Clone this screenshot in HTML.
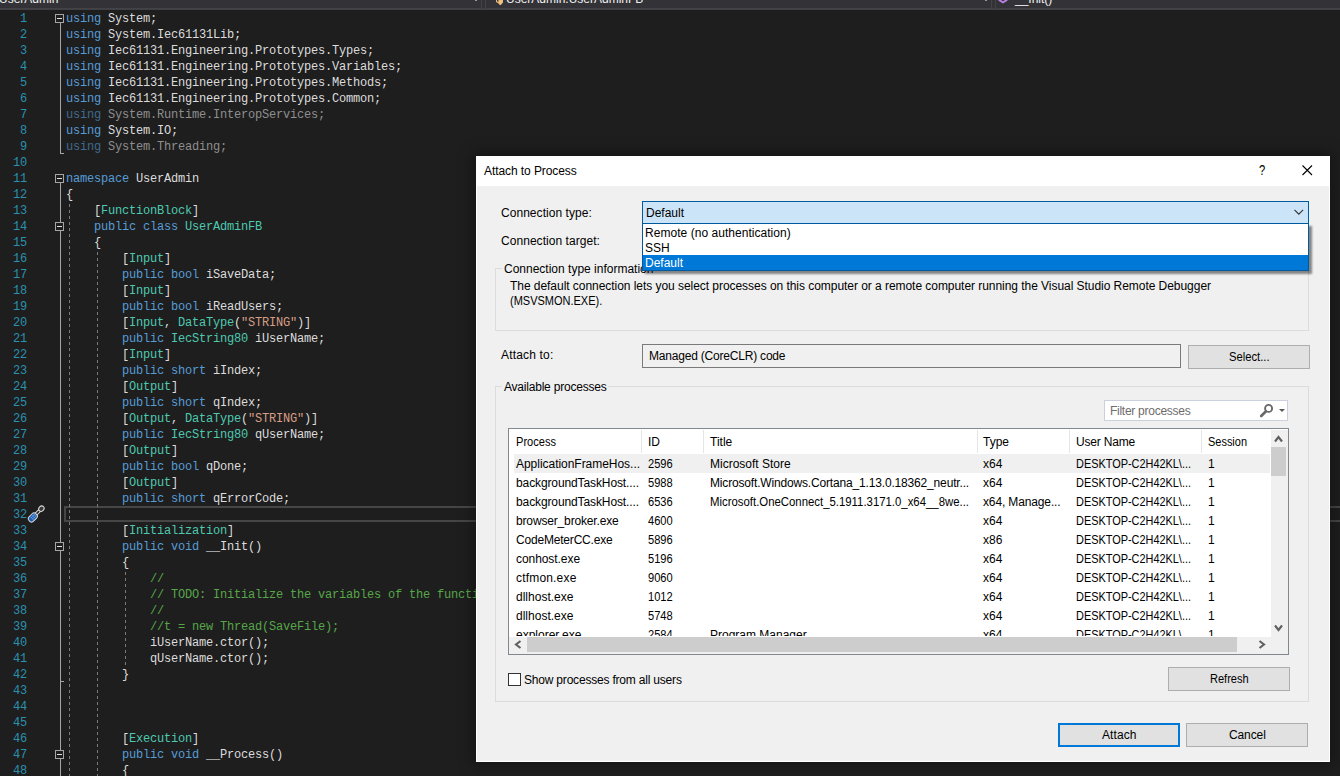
<!DOCTYPE html>
<html><head><meta charset="utf-8"><style>
html,body{margin:0;padding:0}
body{width:1340px;height:776px;overflow:hidden;background:#1e1e1e;position:relative;font-family:"Liberation Sans",sans-serif}
.a{position:absolute}
.ln{position:absolute;left:0;width:27px;text-align:right;color:#2b91af;font:12px "Liberation Mono",monospace;letter-spacing:-0.2px;line-height:16px;white-space:pre}
.cd{position:absolute;left:66px;font:12px "Liberation Mono",monospace;letter-spacing:-0.2px;line-height:16px;white-space:pre;color:#dcdcdc}
.fb{position:absolute;left:55px;width:7px;height:7px;border:1px solid #a5a5a5;background:#1e1e1e}
.fb:after{content:"";position:absolute;left:1px;top:3px;width:5px;height:1px;background:#e0e0e0}
.g{position:absolute;width:1px;background:repeating-linear-gradient(to bottom,#7a7a7a 0,#7a7a7a 3px,transparent 3px,transparent 6px)}
.t{position:absolute;font-size:12px;line-height:15px;white-space:pre;color:#000}
.btn{position:absolute;box-sizing:border-box;background:#e1e1e1;border:1px solid #adadad;font-size:12px;line-height:22px;text-align:center;color:#000}
</style></head><body>
<div class="a" style="left:0;top:0;width:1340px;height:8px;background:#333337"></div><div class="a" style="left:0;top:8px;width:1340px;height:2px;background:#3f3f46"></div><div class="a" style="left:-2px;top:-12px;width:482px;height:19px;border:1px solid #434346;background:#333337"></div><div class="a" style="left:485px;top:-12px;width:505px;height:19px;border:1px solid #434346;background:#333337"></div><div class="a" style="left:995px;top:-12px;width:348px;height:19px;border:1px solid #434346;background:#333337"></div><div class="t" style="left:-1px;top:-8px;color:#f1f1f1">UserAdmin</div><div class="a" style="left:475px;top:0;width:2px;height:1px;background:#999"></div><div class="a" style="left:985px;top:0;width:2px;height:1px;background:#999"></div><svg class="a" style="left:495px;top:0" width="10" height="6"><path d="M1 0 L2 0 L2 1.5 L3.5 1.5 L3.5 0 L8 0 L8 2.5 L6 4.8 L5 5.2 L3 3 L1 2 Z" fill="#eebf7f"/></svg><div class="t" style="left:506px;top:-8px;color:#f1f1f1">UserAdmin.UserAdminFB</div><svg class="a" style="left:998px;top:0" width="11" height="5"><path d="M0.5 0 L9.5 0 L9.5 0.8 L5 3.4 L0.5 0.8 Z" fill="#b77fe0"/><path d="M3.2 0 L5 1.2 L6.8 0 Z" fill="#2d2d30"/></svg><div class="t" style="left:1015px;top:-8px;color:#f1f1f1">__Init()</div><div class="a" style="left:64px;top:506px;width:1300px;height:12px;border:2px solid #464646"></div><div class="g" style="left:69px;top:204px;height:572px"></div><div class="g" style="left:97px;top:252px;height:524px"></div><div class="g" style="left:125px;top:572px;height:94px"></div><div class="a" style="left:60px;top:23px;width:1px;height:131px;background:#a5a5a5"></div><div class="a" style="left:60px;top:153px;width:4px;height:1px;background:#a5a5a5"></div><div class="a" style="left:60px;top:183px;width:1px;height:593px;background:#a5a5a5"></div><div class="a" style="left:60px;top:681px;width:4px;height:1px;background:#a5a5a5"></div><div class="fb" style="top:14px"></div><div class="fb" style="top:174px"></div><div class="fb" style="top:222px"></div><div class="fb" style="top:542px"></div><div class="fb" style="top:750px"></div><div class="ln" style="top:11px">1</div><div class="cd" style="top:11px"><span style="color:#569cd6">using</span><span style="color:#dcdcdc"> System;</span></div><div class="ln" style="top:27px">2</div><div class="cd" style="top:27px"><span style="color:#569cd6">using</span><span style="color:#dcdcdc"> System.Iec61131Lib;</span></div><div class="ln" style="top:43px">3</div><div class="cd" style="top:43px"><span style="color:#569cd6">using</span><span style="color:#dcdcdc"> Iec61131.Engineering.Prototypes.Types;</span></div><div class="ln" style="top:59px">4</div><div class="cd" style="top:59px"><span style="color:#569cd6">using</span><span style="color:#dcdcdc"> Iec61131.Engineering.Prototypes.Variables;</span></div><div class="ln" style="top:75px">5</div><div class="cd" style="top:75px"><span style="color:#569cd6">using</span><span style="color:#dcdcdc"> Iec61131.Engineering.Prototypes.Methods;</span></div><div class="ln" style="top:91px">6</div><div class="cd" style="top:91px"><span style="color:#569cd6">using</span><span style="color:#dcdcdc"> Iec61131.Engineering.Prototypes.Common;</span></div><div class="ln" style="top:107px">7</div><div class="cd" style="top:107px"><span style="color:#406a8c">using</span><span style="color:#8e8e8e"> System.Runtime.InteropServices;</span></div><div class="ln" style="top:123px">8</div><div class="cd" style="top:123px"><span style="color:#569cd6">using</span><span style="color:#dcdcdc"> System.IO;</span></div><div class="ln" style="top:139px">9</div><div class="cd" style="top:139px"><span style="color:#406a8c">using</span><span style="color:#8e8e8e"> System.Threading;</span></div><div class="ln" style="top:155px">10</div><div class="ln" style="top:171px">11</div><div class="cd" style="top:171px"><span style="color:#569cd6">namespace</span><span style="color:#dcdcdc"> UserAdmin</span></div><div class="ln" style="top:187px">12</div><div class="cd" style="top:187px"><span style="color:#dcdcdc">{</span></div><div class="ln" style="top:203px">13</div><div class="cd" style="top:203px"><span style="color:#dcdcdc">    [</span><span style="color:#4ec9b0">FunctionBlock</span><span style="color:#dcdcdc">]</span></div><div class="ln" style="top:219px">14</div><div class="cd" style="top:219px"><span style="color:#dcdcdc">    </span><span style="color:#569cd6">public</span><span style="color:#dcdcdc"> </span><span style="color:#569cd6">class</span><span style="color:#dcdcdc"> </span><span style="color:#4ec9b0">UserAdminFB</span></div><div class="ln" style="top:235px">15</div><div class="cd" style="top:235px"><span style="color:#dcdcdc">    {</span></div><div class="ln" style="top:251px">16</div><div class="cd" style="top:251px"><span style="color:#dcdcdc">        [</span><span style="color:#4ec9b0">Input</span><span style="color:#dcdcdc">]</span></div><div class="ln" style="top:267px">17</div><div class="cd" style="top:267px"><span style="color:#dcdcdc">        </span><span style="color:#569cd6">public</span><span style="color:#dcdcdc"> </span><span style="color:#569cd6">bool</span><span style="color:#dcdcdc"> iSaveData;</span></div><div class="ln" style="top:283px">18</div><div class="cd" style="top:283px"><span style="color:#dcdcdc">        [</span><span style="color:#4ec9b0">Input</span><span style="color:#dcdcdc">]</span></div><div class="ln" style="top:299px">19</div><div class="cd" style="top:299px"><span style="color:#dcdcdc">        </span><span style="color:#569cd6">public</span><span style="color:#dcdcdc"> </span><span style="color:#569cd6">bool</span><span style="color:#dcdcdc"> iReadUsers;</span></div><div class="ln" style="top:315px">20</div><div class="cd" style="top:315px"><span style="color:#dcdcdc">        [</span><span style="color:#4ec9b0">Input</span><span style="color:#dcdcdc">, </span><span style="color:#4ec9b0">DataType</span><span style="color:#dcdcdc">(</span><span style="color:#d69d85">&quot;STRING&quot;</span><span style="color:#dcdcdc">)]</span></div><div class="ln" style="top:331px">21</div><div class="cd" style="top:331px"><span style="color:#dcdcdc">        </span><span style="color:#569cd6">public</span><span style="color:#dcdcdc"> </span><span style="color:#4ec9b0">IecString80</span><span style="color:#dcdcdc"> iUserName;</span></div><div class="ln" style="top:347px">22</div><div class="cd" style="top:347px"><span style="color:#dcdcdc">        [</span><span style="color:#4ec9b0">Input</span><span style="color:#dcdcdc">]</span></div><div class="ln" style="top:363px">23</div><div class="cd" style="top:363px"><span style="color:#dcdcdc">        </span><span style="color:#569cd6">public</span><span style="color:#dcdcdc"> </span><span style="color:#569cd6">short</span><span style="color:#dcdcdc"> iIndex;</span></div><div class="ln" style="top:379px">24</div><div class="cd" style="top:379px"><span style="color:#dcdcdc">        [</span><span style="color:#4ec9b0">Output</span><span style="color:#dcdcdc">]</span></div><div class="ln" style="top:395px">25</div><div class="cd" style="top:395px"><span style="color:#dcdcdc">        </span><span style="color:#569cd6">public</span><span style="color:#dcdcdc"> </span><span style="color:#569cd6">short</span><span style="color:#dcdcdc"> qIndex;</span></div><div class="ln" style="top:411px">26</div><div class="cd" style="top:411px"><span style="color:#dcdcdc">        [</span><span style="color:#4ec9b0">Output</span><span style="color:#dcdcdc">, </span><span style="color:#4ec9b0">DataType</span><span style="color:#dcdcdc">(</span><span style="color:#d69d85">&quot;STRING&quot;</span><span style="color:#dcdcdc">)]</span></div><div class="ln" style="top:427px">27</div><div class="cd" style="top:427px"><span style="color:#dcdcdc">        </span><span style="color:#569cd6">public</span><span style="color:#dcdcdc"> </span><span style="color:#4ec9b0">IecString80</span><span style="color:#dcdcdc"> qUserName;</span></div><div class="ln" style="top:443px">28</div><div class="cd" style="top:443px"><span style="color:#dcdcdc">        [</span><span style="color:#4ec9b0">Output</span><span style="color:#dcdcdc">]</span></div><div class="ln" style="top:459px">29</div><div class="cd" style="top:459px"><span style="color:#dcdcdc">        </span><span style="color:#569cd6">public</span><span style="color:#dcdcdc"> </span><span style="color:#569cd6">bool</span><span style="color:#dcdcdc"> qDone;</span></div><div class="ln" style="top:475px">30</div><div class="cd" style="top:475px"><span style="color:#dcdcdc">        [</span><span style="color:#4ec9b0">Output</span><span style="color:#dcdcdc">]</span></div><div class="ln" style="top:491px">31</div><div class="cd" style="top:491px"><span style="color:#dcdcdc">        </span><span style="color:#569cd6">public</span><span style="color:#dcdcdc"> </span><span style="color:#569cd6">short</span><span style="color:#dcdcdc"> qErrorCode;</span></div><div class="ln" style="top:507px">32</div><div class="ln" style="top:523px">33</div><div class="cd" style="top:523px"><span style="color:#dcdcdc">        [</span><span style="color:#4ec9b0">Initialization</span><span style="color:#dcdcdc">]</span></div><div class="ln" style="top:539px">34</div><div class="cd" style="top:539px"><span style="color:#dcdcdc">        </span><span style="color:#569cd6">public</span><span style="color:#dcdcdc"> </span><span style="color:#569cd6">void</span><span style="color:#dcdcdc"> __Init()</span></div><div class="ln" style="top:555px">35</div><div class="cd" style="top:555px"><span style="color:#dcdcdc">        {</span></div><div class="ln" style="top:571px">36</div><div class="cd" style="top:571px"><span style="color:#57a64a">            //</span></div><div class="ln" style="top:587px">37</div><div class="cd" style="top:587px"><span style="color:#57a64a">            // TODO: Initialize the variables of the function block here</span></div><div class="ln" style="top:603px">38</div><div class="cd" style="top:603px"><span style="color:#57a64a">            //</span></div><div class="ln" style="top:619px">39</div><div class="cd" style="top:619px"><span style="color:#57a64a">            //t = new Thread(SaveFile);</span></div><div class="ln" style="top:635px">40</div><div class="cd" style="top:635px"><span style="color:#dcdcdc">            iUserName.ctor();</span></div><div class="ln" style="top:651px">41</div><div class="cd" style="top:651px"><span style="color:#dcdcdc">            qUserName.ctor();</span></div><div class="ln" style="top:667px">42</div><div class="cd" style="top:667px"><span style="color:#dcdcdc">        }</span></div><div class="ln" style="top:683px">43</div><div class="ln" style="top:699px">44</div><div class="ln" style="top:715px">45</div><div class="ln" style="top:731px">46</div><div class="cd" style="top:731px"><span style="color:#dcdcdc">        [</span><span style="color:#4ec9b0">Execution</span><span style="color:#dcdcdc">]</span></div><div class="ln" style="top:747px">47</div><div class="cd" style="top:747px"><span style="color:#dcdcdc">        </span><span style="color:#569cd6">public</span><span style="color:#dcdcdc"> </span><span style="color:#569cd6">void</span><span style="color:#dcdcdc"> __Process()</span></div><div class="ln" style="top:763px">48</div><div class="cd" style="top:763px"><span style="color:#dcdcdc">        {</span></div><svg class="a" style="left:26px;top:503px" width="20" height="20" viewBox="0 0 20 20">
<g transform="translate(10.6 10.6) rotate(-46)">
<path d="M-1 -1.3 L4.2 -1.3 L4.2 1.3 L-1 1.3" fill="#2a2a2a" stroke="#d8d8d8" stroke-width="1"/>
<ellipse cx="6.9" cy="0" rx="2.9" ry="2.4" fill="#3a3a3a" stroke="#d8d8d8" stroke-width="1.1"/>
<rect x="-10.2" y="-3.1" width="9.6" height="6.2" rx="2.6" fill="#1a5fb4" stroke="#d8d8d8" stroke-width="1"/>
<path d="M-6.5 -2 v4 M-4.5 -2 v4 M-2.5 -2 v4 M-7.5 -1 h6 M-7.5 1 h6" stroke="#7fa6d6" stroke-width="0.6"/>
</g></svg><div class="a" style="left:476px;top:156px;width:854px;height:606px;box-sizing:border-box;background:#fff;box-shadow:0 0 14px 3px rgba(0,0,0,0.35)"></div><div class="a" style="left:477px;top:186px;width:852px;height:575px;box-sizing:border-box;background:#f0f0f0"></div><div class="t" style="left:484px;top:164px;color:#000;letter-spacing:-0.079px;">Attach to Process</div><div class="t" style="left:1259px;top:163px;color:#000;font-size:14px;transform:scaleX(0.8);transform-origin:0 0">?</div><svg class="a" style="left:1302px;top:165px" width="11" height="11"><path d="M0.5 0.5 L10 10 M10 0.5 L0.5 10" stroke="#000" stroke-width="1.1"/></svg><div class="t" style="left:501px;top:206px;color:#000;letter-spacing:0.046px;">Connection type:</div><div class="t" style="left:501px;top:234px;color:#000;letter-spacing:0.047px;">Connection target:</div><div class="a" style="left:495px;top:268px;width:814px;height:63px;box-sizing:border-box;border:1px solid #dcdcdc"></div><div class="a" style="left:502px;top:262px;width:158px;height:14px;box-sizing:border-box;background:#f0f0f0"></div><div class="t" style="left:504px;top:262px;color:#000;">Connection type information</div><div class="t" style="left:510px;top:279px;color:#000;letter-spacing:-0.046px;">The default connection lets you select processes on this computer or a remote computer running the Visual Studio Remote Debugger</div><div class="t" style="left:510px;top:294px;color:#000;transform:scaleX(0.9157);transform-origin:0 0;">(MSVSMON.EXE).</div><div class="a" style="left:642px;top:201px;width:667px;height:23px;box-sizing:border-box;background:#cce4f7;border:1px solid #005a9e"></div><div class="t" style="left:646px;top:206px;color:#000;">Default</div><svg class="a" style="left:1294px;top:209px" width="10" height="7"><path d="M0.5 0.8 L4.8 5.2 L9.1 0.8" fill="none" stroke="#333" stroke-width="1.1"/></svg><div class="a" style="left:642px;top:223px;width:667px;height:48px;box-sizing:border-box;background:#fff;border:1px solid #005a9e;box-shadow:3px 3px 2px rgba(0,0,0,0.45)"></div><div class="a" style="left:643px;top:255px;width:665px;height:15px;box-sizing:border-box;background:#0078d7"></div><div class="t" style="left:645px;top:226px;color:#000;letter-spacing:0.040px;">Remote (no authentication)</div><div class="t" style="left:645px;top:241px;color:#000;">SSH</div><div class="t" style="left:645px;top:256px;color:#fff;">Default</div><div class="t" style="left:501px;top:348px;color:#000;letter-spacing:0.170px;">Attach to:</div><div class="a" style="left:642px;top:344px;width:539px;height:24px;box-sizing:border-box;border:1px solid #7a7a7a;background:#f0f0f0"></div><div class="t" style="left:649px;top:349px;color:#000;letter-spacing:-0.202px;">Managed (CoreCLR) code</div><div class="a" style="left:1188px;top:345px;width:122px;height:24px;box-sizing:border-box;background:#e1e1e1;border:1px solid #adadad"></div><div class="t" style="left:1229px;top:350px;color:#000;transform:scaleX(0.9364);transform-origin:0 0;">Select...</div><div class="a" style="left:495px;top:386px;width:814px;height:316px;box-sizing:border-box;border:1px solid #dcdcdc"></div><div class="a" style="left:502px;top:380px;width:106px;height:14px;box-sizing:border-box;background:#f0f0f0"></div><div class="t" style="left:504px;top:380px;color:#000;letter-spacing:-0.211px;">Available processes</div><div class="a" style="left:1104px;top:400px;width:184px;height:21px;box-sizing:border-box;background:#fff;border:1px solid #ccd0dc"></div><div class="t" style="left:1110px;top:404px;color:#6d6d6d;letter-spacing:-0.269px;">Filter processes</div><svg class="a" style="left:1259px;top:403px" width="16" height="15" viewBox="0 0 16 15">
<circle cx="9.6" cy="5.4" r="3.5" fill="none" stroke="#686868" stroke-width="1.9"/>
<path d="M7 8.3 L2.2 13" stroke="#686868" stroke-width="2.6" stroke-linecap="round"/></svg><svg class="a" style="left:1279px;top:409px" width="6" height="4"><path d="M0 0 L6 0 L3 3 Z" fill="#585858"/></svg><div class="a" style="left:508px;top:428px;width:781px;height:227px;box-sizing:border-box;background:#fff;border:1px solid #828790"></div><div class="a" style="left:641px;top:430px;width:1px;height:23px;box-sizing:border-box;background:#e5e5e5"></div><div class="a" style="left:703px;top:430px;width:1px;height:23px;box-sizing:border-box;background:#e5e5e5"></div><div class="a" style="left:977px;top:430px;width:1px;height:23px;box-sizing:border-box;background:#e5e5e5"></div><div class="a" style="left:1069px;top:430px;width:1px;height:23px;box-sizing:border-box;background:#e5e5e5"></div><div class="a" style="left:1201px;top:430px;width:1px;height:23px;box-sizing:border-box;background:#e5e5e5"></div><div class="t" style="left:516px;top:435px;color:#000;transform:scaleX(0.9225);transform-origin:0 0;">Process</div><div class="t" style="left:648px;top:435px;color:#000;">ID</div><div class="t" style="left:710px;top:435px;color:#000;">Title</div><div class="t" style="left:983px;top:435px;color:#000;">Type</div><div class="t" style="left:1076px;top:435px;color:#000;letter-spacing:-0.188px;">User Name</div><div class="t" style="left:1208px;top:435px;color:#000;transform:scaleX(0.9133);transform-origin:0 0;">Session</div><div class="a" style="left:509px;top:454px;width:762px;height:182px;overflow:hidden"><div class="a" style="left:5px;top:0px;width:756px;height:19px;box-sizing:border-box;background:#f0f0f0"></div><div class="t" style="left:7px;top:3px;color:#000;letter-spacing:-0.033px;">ApplicationFrameHos...</div><div class="t" style="left:139px;top:3px;color:#000;transform:scaleX(0.9250);transform-origin:0 0;">2596</div><div class="t" style="left:201px;top:3px;color:#000;">Microsoft Store</div><div class="t" style="left:474px;top:3px;color:#000;">x64</div><div class="t" style="left:567px;top:3px;color:#000;transform:scaleX(0.9091);transform-origin:0 0;">DESKTOP-C2H42KL\...</div><div class="t" style="left:699px;top:3px;color:#000;">1</div><div class="t" style="left:7px;top:22px;color:#000;letter-spacing:-0.109px;">backgroundTaskHost....</div><div class="t" style="left:139px;top:22px;color:#000;transform:scaleX(0.9250);transform-origin:0 0;">5988</div><div class="t" style="left:201px;top:22px;color:#000;letter-spacing:-0.167px;">Microsoft.Windows.Cortana_1.13.0.18362_neutr...</div><div class="t" style="left:474px;top:22px;color:#000;">x64</div><div class="t" style="left:567px;top:22px;color:#000;transform:scaleX(0.9091);transform-origin:0 0;">DESKTOP-C2H42KL\...</div><div class="t" style="left:699px;top:22px;color:#000;">1</div><div class="t" style="left:7px;top:41px;color:#000;letter-spacing:-0.109px;">backgroundTaskHost....</div><div class="t" style="left:139px;top:41px;color:#000;transform:scaleX(0.9250);transform-origin:0 0;">6536</div><div class="t" style="left:201px;top:41px;color:#000;transform:scaleX(0.9477);transform-origin:0 0;">Microsoft.OneConnect_5.1911.3171.0_x64__8we...</div><div class="t" style="left:474px;top:41px;color:#000;letter-spacing:-0.135px;">x64, Manage...</div><div class="t" style="left:567px;top:41px;color:#000;transform:scaleX(0.9091);transform-origin:0 0;">DESKTOP-C2H42KL\...</div><div class="t" style="left:699px;top:41px;color:#000;">1</div><div class="t" style="left:7px;top:60px;color:#000;letter-spacing:-0.155px;">browser_broker.exe</div><div class="t" style="left:139px;top:60px;color:#000;transform:scaleX(0.9250);transform-origin:0 0;">4600</div><div class="t" style="left:474px;top:60px;color:#000;">x64</div><div class="t" style="left:567px;top:60px;color:#000;transform:scaleX(0.9091);transform-origin:0 0;">DESKTOP-C2H42KL\...</div><div class="t" style="left:699px;top:60px;color:#000;">1</div><div class="t" style="left:7px;top:79px;color:#000;letter-spacing:-0.192px;">CodeMeterCC.exe</div><div class="t" style="left:139px;top:79px;color:#000;transform:scaleX(0.9250);transform-origin:0 0;">5896</div><div class="t" style="left:474px;top:79px;color:#000;">x86</div><div class="t" style="left:567px;top:79px;color:#000;transform:scaleX(0.9091);transform-origin:0 0;">DESKTOP-C2H42KL\...</div><div class="t" style="left:699px;top:79px;color:#000;">1</div><div class="t" style="left:7px;top:98px;color:#000;letter-spacing:-0.065px;">conhost.exe</div><div class="t" style="left:139px;top:98px;color:#000;transform:scaleX(0.9250);transform-origin:0 0;">5196</div><div class="t" style="left:474px;top:98px;color:#000;">x64</div><div class="t" style="left:567px;top:98px;color:#000;transform:scaleX(0.9091);transform-origin:0 0;">DESKTOP-C2H42KL\...</div><div class="t" style="left:699px;top:98px;color:#000;">1</div><div class="t" style="left:7px;top:117px;color:#000;letter-spacing:0.180px;">ctfmon.exe</div><div class="t" style="left:139px;top:117px;color:#000;transform:scaleX(0.9250);transform-origin:0 0;">9060</div><div class="t" style="left:474px;top:117px;color:#000;">x64</div><div class="t" style="left:567px;top:117px;color:#000;transform:scaleX(0.9091);transform-origin:0 0;">DESKTOP-C2H42KL\...</div><div class="t" style="left:699px;top:117px;color:#000;">1</div><div class="t" style="left:7px;top:136px;color:#000;letter-spacing:0.011px;">dllhost.exe</div><div class="t" style="left:139px;top:136px;color:#000;transform:scaleX(0.9250);transform-origin:0 0;">1012</div><div class="t" style="left:474px;top:136px;color:#000;">x64</div><div class="t" style="left:567px;top:136px;color:#000;transform:scaleX(0.9091);transform-origin:0 0;">DESKTOP-C2H42KL\...</div><div class="t" style="left:699px;top:136px;color:#000;">1</div><div class="t" style="left:7px;top:155px;color:#000;letter-spacing:0.011px;">dllhost.exe</div><div class="t" style="left:139px;top:155px;color:#000;transform:scaleX(0.9250);transform-origin:0 0;">5748</div><div class="t" style="left:474px;top:155px;color:#000;">x64</div><div class="t" style="left:567px;top:155px;color:#000;transform:scaleX(0.9091);transform-origin:0 0;">DESKTOP-C2H42KL\...</div><div class="t" style="left:699px;top:155px;color:#000;">1</div><div class="t" style="left:7px;top:174px;color:#000;">explorer.exe</div><div class="t" style="left:139px;top:174px;color:#000;transform:scaleX(0.9250);transform-origin:0 0;">2584</div><div class="t" style="left:201px;top:174px;color:#000;">Program Manager</div><div class="t" style="left:474px;top:174px;color:#000;">x64</div><div class="t" style="left:567px;top:174px;color:#000;transform:scaleX(0.9091);transform-origin:0 0;">DESKTOP-C2H42KL\...</div><div class="t" style="left:699px;top:174px;color:#000;">1</div></div><div class="a" style="left:1271px;top:430px;width:17px;height:207px;box-sizing:border-box;background:#f0f0f0"></div><div class="a" style="left:1271px;top:447px;width:15px;height:29px;box-sizing:border-box;background:#cdcdcd"></div><svg class="a" style="left:1274px;top:435px" width="10" height="8"><path d="M1 6.5 L4.5 2 L8 6.5" fill="none" stroke="#606060" stroke-width="2.1"/></svg><svg class="a" style="left:1274px;top:624px" width="10" height="8"><path d="M1 1.5 L4.5 6 L8 1.5" fill="none" stroke="#606060" stroke-width="2.1"/></svg><div class="a" style="left:509px;top:637px;width:779px;height:17px;box-sizing:border-box;background:#f0f0f0"></div><div class="a" style="left:527px;top:637px;width:710px;height:15px;box-sizing:border-box;background:#cdcdcd"></div><svg class="a" style="left:514px;top:640px" width="8" height="10"><path d="M6.5 1 L2 4.5 L6.5 8" fill="none" stroke="#606060" stroke-width="2.1"/></svg><svg class="a" style="left:1258px;top:640px" width="8" height="10"><path d="M1.5 1 L6 4.5 L1.5 8" fill="none" stroke="#606060" stroke-width="2.1"/></svg><div class="a" style="left:508px;top:673px;width:13px;height:13px;box-sizing:border-box;background:#fff;border:1px solid #333"></div><div class="t" style="left:524px;top:673px;color:#000;letter-spacing:-0.197px;">Show processes from all users</div><div class="a" style="left:1168px;top:667px;width:122px;height:24px;box-sizing:border-box;background:#e1e1e1;border:1px solid #adadad"></div><div class="t" style="left:1210px;top:672px;color:#000;transform:scaleX(0.9207);transform-origin:0 0;">Refresh</div><div class="a" style="left:1058px;top:723px;width:122px;height:24px;box-sizing:border-box;background:#e1e1e1;border:2px solid #0078d7"></div><div class="t" style="left:1102px;top:728px;color:#000;letter-spacing:0.078px;">Attach</div><div class="a" style="left:1186px;top:723px;width:122px;height:24px;box-sizing:border-box;background:#e1e1e1;border:1px solid #adadad"></div><div class="t" style="left:1229px;top:728px;color:#000;letter-spacing:-0.110px;">Cancel</div></body></html>
